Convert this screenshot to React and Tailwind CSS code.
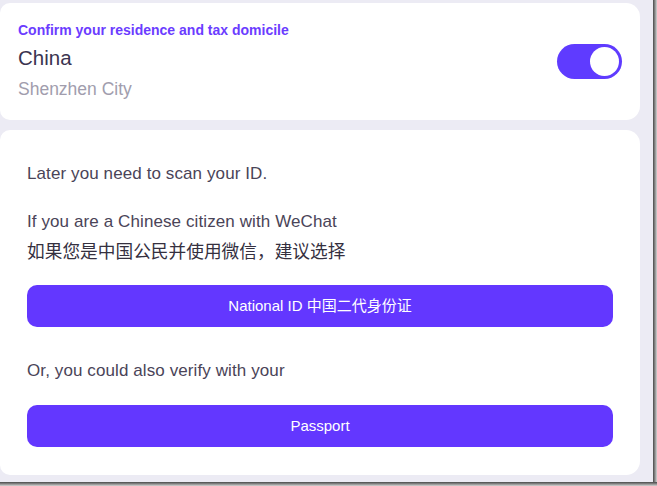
import React from 'react';

const font = { fontFamily: '"Liberation Sans", "Noto Sans CJK SC", sans-serif' };

const Toggle = () => (
  <div className="w-[65px] h-[35px] rounded-full bg-[#5f3bff] flex items-center justify-end pr-[3px]">
    <div className="w-[29px] h-[29px] rounded-full bg-white" />
  </div>
);

const PrimaryButton = ({ children }) => (
  <button className="w-full h-[42px] rounded-[10px] bg-[#6337ff] text-white text-[15px] flex items-center justify-center">
    {children}
  </button>
);

export default function App() {
  return (
    <div className="w-[657px] h-[486px] bg-white" style={font}>
      <div className="w-[657px] h-[486px] flex flex-col">
        <div className="flex h-[482px]">
          <div className="w-[653px] h-[482px] bg-[#ecebf4] pr-[13px] pt-[3px] flex flex-col gap-[10px]">
            {/* Residence card */}
            <div className="h-[117px] bg-white rounded-r-[14px] rounded-l-[10px] flex items-center justify-between pl-[18px] pr-[18px]">
              <div className="flex flex-col">
                <span className="text-[14px] font-bold text-[#6b3cff] leading-[18px]">
                  Confirm your residence and tax domicile
                </span>
                <span className="text-[20.5px] text-[#3a3450] leading-[28px] mt-[5px]">China</span>
                <span className="text-[17.5px] text-[#a19dad] leading-[26px] mt-[4px]">Shenzhen City</span>
              </div>
              <Toggle />
            </div>

            {/* Verify card */}
            <div className="h-[345px] bg-white rounded-r-[14px] rounded-l-[10px] pl-[27px] pr-[27px] pt-[32px] flex flex-col">
              <p className="text-[17px] tracking-[0.1px] text-[#4a4458] leading-[24px]">Later you need to scan your ID.</p>
              <p className="text-[17px] tracking-[0.1px] text-[#4a4458] leading-[24px] mt-[24px]">
                If you are a Chinese citizen with WeChat
              </p>
              <p className="text-[17.7px] text-[#35303f] leading-[30px] mt-[3px]">如果您是中国公民并使用微信，建议选择</p>
              <div className="mt-[18px]">
                <PrimaryButton>National ID 中国二代身份证</PrimaryButton>
              </div>
              <p className="text-[17px] tracking-[0.1px] text-[#4a4458] leading-[24px] mt-[32px]">
                Or, you could also verify with your
              </p>
              <div className="mt-[22px]">
                <PrimaryButton>Passport</PrimaryButton>
              </div>
            </div>
          </div>
          <div className="w-[4px] h-[482px] bg-gradient-to-r from-[#4a4a4a] to-[#d4d4d4]" />
        </div>
        <div className="w-[657px] h-[4px] bg-gradient-to-b from-[#4a4a4a] to-[#d4d4d4]" />
      </div>
    </div>
  );
}
